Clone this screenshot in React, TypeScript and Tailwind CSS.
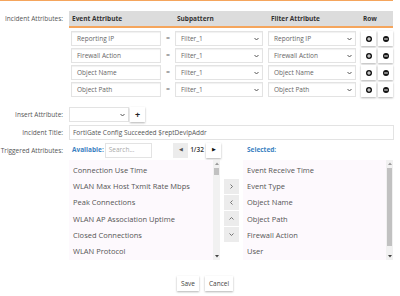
import React from "react";

const F = { fontFamily: '"Open Sans", "Liberation Sans", sans-serif' };

function Chevron() {
  return (
    <svg width="5" height="4" viewBox="0 0 5 4" className="shrink-0">
      <path d="M0.5 1 L2.5 3 L4.5 1" fill="none" stroke="#555" strokeWidth="1" />
    </svg>
  );
}

function CircleIcon({ plus }: { plus: boolean }) {
  return (
    <svg width="6" height="6" viewBox="0 0 6 6">
      <circle cx="3" cy="3" r="3" fill="#111" />
      <rect x="1.2" y="2.5" width="3.6" height="1" fill="#fff" />
      {plus && <rect x="2.5" y="1.2" width="1" height="3.6" fill="#fff" />}
    </svg>
  );
}

function Select({ value, w }: { value: string; w: string }) {
  return (
    <div className={`${w} h-[15px] flex items-center justify-between pl-[5px] pr-[3px] bg-white border border-[#e3e3e3] shadow-[inset_0_1px_1px_rgba(0,0,0,0.06)] text-[#666] text-[6.5px]`}>
      <span>{value}</span>
      <Chevron />
    </div>
  );
}

function Btn({ children, gray }: { children: React.ReactNode; gray?: boolean }) {
  return (
    <div className={`w-[15px] h-[15px] flex items-center justify-center ${gray ? "bg-[#ececec]" : "bg-white shadow-[0_1px_2px_rgba(0,0,0,0.3)]"} text-[#555] text-[6px]`}>
      {children}
    </div>
  );
}

const rows = [
  ["Reporting IP", "Reporting IP"],
  ["Firewall Action", "Firewall Action"],
  ["Object Name", "Object Name"],
  ["Object Path", "Object Path"],
];

const avail = [
  "Connection Use Time",
  "WLAN Max Host Txmit Rate Mbps",
  "Peak Connections",
  "WLAN AP Association Uptime",
  "Closed Connections",
  "WLAN Protocol",
];
const selected = ["Event Receive Time", "Event Type", "Object Name", "Object Path", "Firewall Action", "User"];

function Scrollbar({ thumbTop, thumbH }: { thumbTop: number; thumbH: number }) {
  return (
    <div className="w-[7px] h-full flex flex-col items-center bg-[#f1f1f1]">
      <div className="h-[7px] flex items-center justify-center">
        <svg width="4" height="3" viewBox="0 0 4 3"><path d="M0 3 L2 0.5 L4 3Z" fill="#999" /></svg>
      </div>
      <div className="flex-1 w-full relative">
        <div className="absolute left-[1px] right-[1px] bg-[#c1c1c1]" style={{ top: thumbTop, height: thumbH }} />
      </div>
      <div className="h-[7px] flex items-center justify-center">
        <svg width="4" height="3" viewBox="0 0 4 3"><path d="M0 0 L2 2.5 L4 0Z" fill="#444" /></svg>
      </div>
    </div>
  );
}

function List({ items, w, thumbTop, thumbH }: { items: string[]; w: string; thumbTop: number; thumbH: number }) {
  return (
    <div className={`${w} h-[100px] bg-[#fdf9fd] flex`}>
      <div className="flex-1 flex flex-col pl-[4px] pt-[2px]">
        {items.map((t) => (
          <div key={t} className="h-[16.4px] flex items-center text-[7.5px] text-[#555] font-medium">{t}</div>
        ))}
      </div>
      <Scrollbar thumbTop={thumbTop} thumbH={thumbH} />
    </div>
  );
}

export default function App() {
  return (
    <div className="w-[400px] h-[296px] bg-white relative overflow-hidden" style={F}>
      <div className="w-[393px] h-px bg-[#f5a55c]" />
      <div className="flex mt-[10px]">
        <div className="w-[64px] text-right text-[6.5px] text-[#555] pt-[3px] pr-[1px]">Incident Attributes:</div>
        <div className="ml-[5px] w-[324px]">
          <div className="h-[17px] bg-[#dcdcdc] border-b-[2px] border-[#f5a55c] flex items-center text-[6.5px] font-bold text-[#333]">
            <div className="w-[108px] pl-[3px]">Event Attribute</div>
            <div className="w-[94px]">Subpattern</div>
            <div className="w-[92px]">Filter Attribute</div>
            <div>Row</div>
          </div>
          <div className="flex flex-col gap-[2px] mt-[3px]">
            {rows.map((r) => (
              <div key={r[0]} className="flex items-center">
                <div className="ml-[2px] w-[90px] h-[15px] flex items-center pl-[5px] bg-white border border-[#e3e3e3] shadow-[inset_0_1px_1px_rgba(0,0,0,0.06)] text-[#666] text-[6.5px]">{r[0]}</div>
                <div className="w-[14px] text-center text-[#666] text-[7px]">=</div>
                <Select value="Filter_1" w="w-[88px]" />
                <div className="w-[5px]" />
                <Select value={r[1]} w="w-[88px]" />
                <div className="w-[5px]" />
                <Btn><CircleIcon plus /></Btn>
                <div className="w-[2px]" />
                <Btn><CircleIcon plus={false} /></Btn>
              </div>
            ))}
          </div>
        </div>
      </div>

      <div className="flex items-center mt-[10px]">
        <div className="w-[64px] text-right text-[6.5px] text-[#555] pr-[1px]">Insert Attribute:</div>
        <div className="ml-[5px] w-[60px] h-[15px] flex items-center justify-end pr-[3px] bg-white border border-[#e3e3e3]"><Chevron /></div>
        <div className="ml-[1px]">
          <Btn><span className="text-[#222] text-[9px] font-bold leading-none">+</span></Btn>
        </div>
      </div>

      <div className="flex items-center mt-[3px]">
        <div className="w-[64px] text-right text-[6.5px] text-[#555] pr-[1px]">Incident Title:</div>
        <div className="ml-[5px] w-[325px] h-[15px] flex items-center pl-[3px] bg-white border border-[#e3e3e3] text-[#555] text-[6.5px]">FortiGate Config Succeeded $reptDevIpAddr</div>
      </div>

      <div className="flex mt-[2px]">
        <div className="w-[64px] text-right text-[6.5px] text-[#555] pr-[1px] pt-[4px]">Triggered Attributes:</div>
        <div className="ml-[5px] flex flex-col">
          <div className="flex items-center h-[16px]">
            <div className="w-[152px] flex items-center">
              <span className="pl-[3px] text-[6.5px] font-bold text-[#3a7fc1] whitespace-nowrap shrink-0">Available:</span>
              <div className="ml-[1px] w-[47px] h-[15px] flex items-center pl-[3px] bg-white border border-[#e3e3e3] text-[#aaa] text-[6.5px] shrink-0">Search...</div>
              <div className="ml-auto flex items-center">
                <Btn gray><span className="text-[5px]">◀</span></Btn>
                <span className="w-[18px] text-center text-[6.5px] text-[#333] font-semibold">1/32</span>
                <Btn><span className="text-[5px] text-[#111]">▶</span></Btn>
              </div>
            </div>
            <span className="ml-[26px] text-[6.5px] font-bold text-[#3a7fc1]">Selected:</span>
          </div>
          <div className="flex mt-[2px]">
            <List items={avail} w="w-[151px]" thumbTop={1} thumbH={7} />
            <div className="w-[23px] flex flex-col items-center pt-[19px] gap-[1.5px]">
              {[">", "<", "^", "v"].map((c) => (
                <div key={c} className="w-[15px] h-[14.5px] flex items-center justify-center bg-[#ececec] text-[#666] text-[7px]">
                  {c === "^" ? (
                    <svg width="5" height="3" viewBox="0 0 5 3"><path d="M0.5 2.5 L2.5 0.5 L4.5 2.5" fill="none" stroke="#666" strokeWidth="0.9" /></svg>
                  ) : c === "v" ? (
                    <svg width="5" height="3" viewBox="0 0 5 3"><path d="M0.5 0.5 L2.5 2.5 L4.5 0.5" fill="none" stroke="#666" strokeWidth="0.9" /></svg>
                  ) : c === ">" ? (
                    <svg width="3" height="5" viewBox="0 0 3 5"><path d="M0.5 0.5 L2.5 2.5 L0.5 4.5" fill="none" stroke="#666" strokeWidth="0.9" /></svg>
                  ) : (
                    <svg width="3" height="5" viewBox="0 0 3 5"><path d="M2.5 0.5 L0.5 2.5 L2.5 4.5" fill="none" stroke="#666" strokeWidth="0.9" /></svg>
                  )}
                </div>
              ))}
            </div>
            <List items={selected} w="w-[150px]" thumbTop={1} thumbH={78} />
          </div>
        </div>
      </div>

      <div className="flex justify-center gap-[6px] mt-[16px] pl-[10px]">
        <div className="h-[15px] px-[4px] flex items-center bg-white shadow-[0_1px_2px_rgba(0,0,0,0.3)] text-[6.5px] text-[#444]">Save</div>
        <div className="h-[15px] px-[4px] flex items-center bg-white shadow-[0_1px_2px_rgba(0,0,0,0.3)] text-[6.5px] text-[#444]">Cancel</div>
      </div>
    </div>
  );
}
